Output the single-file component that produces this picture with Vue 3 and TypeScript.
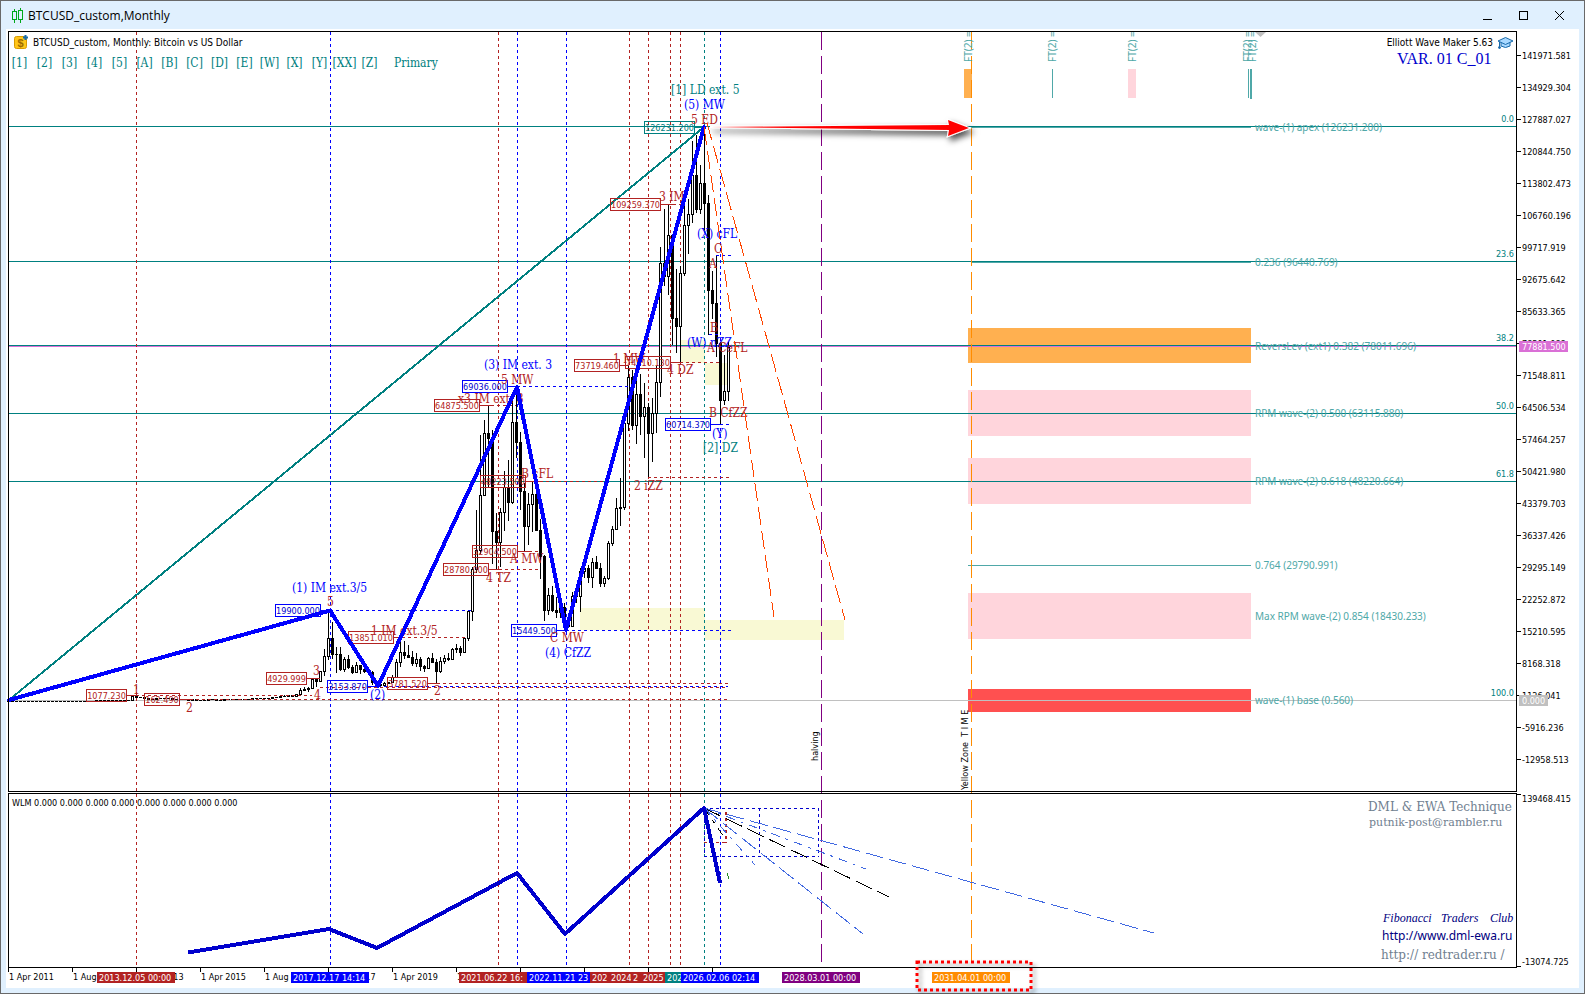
<script setup lang="ts">
type Seg = [number, number, number, number]

const FIRST_X = 8.5
const MONTH = 4
const TOP_PRICE = 141971.581
const STEP = 7042.277

const yOf = (k: number): number => 55.5 + ((TOP_PRICE - k * 1000) / STEP) * 32

// Monthly quotes in thousands: early years by close only, later years as [high, low, close]
const early: number[] = [
  0, 0.01, 0.02, 0.01, 0.01, 0.01, 0, 0, 0,
  0.01, 0, 0, 0, 0.01, 0.01, 0.01, 0.01, 0.01, 0.01, 0.01, 0.01,
  0.02, 0.03, 0.09, 0.14, 0.13, 0.1, 0.11, 0.14, 0.14, 0.2, 1.12,
  0.75, 0.8, 0.55, 0.45, 0.45, 0.63, 0.64, 0.58, 0.48, 0.39, 0.34, 0.38, 0.32,
  0.22, 0.25, 0.24, 0.24, 0.23, 0.26, 0.28, 0.23, 0.24, 0.31, 0.38, 0.43,
  0.37, 0.44, 0.42, 0.45, 0.53, 0.67, 0.62, 0.57, 0.61, 0.7, 0.74, 0.96,
]
const late: [number, number, number][] = [
  [1.16, 0.75, 0.97], [1.22, 0.93, 1.19], [1.33, 0.89, 1.08], [1.36, 1.06, 1.35], [2.78, 1.34, 2.3], [3, 2.05, 2.48],
  [2.93, 1.81, 2.87], [4.76, 2.6, 4.7], [4.93, 2.98, 4.36], [6.47, 4.1, 6.45], [11.4, 5.4, 9.9], [19.9, 9, 13.8],
  [17.2, 9.2, 10.2], [11.8, 6, 10.3], [11.7, 6.6, 6.93], [9.7, 6.4, 9.24], [10, 7.05, 7.49], [7.8, 5.8, 6.39],
  [8.5, 6.07, 7.73], [7.7, 5.88, 7.01], [7.4, 6.1, 6.61], [6.8, 6.2, 6.34], [6.6, 3.5, 4.02], [4.3, 3.15, 3.69],
  [4.1, 3.35, 3.41], [4.2, 3.3, 3.8], [4.15, 3.67, 4.1], [5.65, 4.05, 5.3], [9.1, 5.3, 8.55], [13.85, 7.45, 10.8],
  [13.2, 9.05, 10.08], [12.3, 9.3, 9.59], [10.9, 7.7, 8.28], [10.5, 7.3, 9.15], [9.5, 6.5, 7.55], [7.8, 6.4, 7.2],
  [9.6, 6.85, 9.35], [10.5, 8.4, 8.52], [9.2, 3.78, 6.41], [9.5, 6.15, 8.62], [10.1, 8.1, 9.45], [10.4, 8.8, 9.14],
  [11.5, 8.9, 11.33], [12.5, 10.5, 11.65], [12.05, 9.8, 10.78], [14.1, 10.4, 13.8], [19.9, 13.2, 19.7], [29.3, 17.6, 28.98],
  [42, 28, 33.1], [58.4, 32.3, 45.2], [61.8, 45, 58.8], [64.9, 47, 57.8], [59.6, 30, 37.3], [41.3, 28.8, 35],
  [42.4, 29.3, 41.5], [50.5, 37.3, 47.1], [52.9, 39.6, 43.8], [67, 43.3, 61.3], [69, 53.3, 57], [59.1, 42, 46.2],
  [47.9, 32.9, 38.5], [45.8, 34.3, 43.2], [48.2, 37.2, 45.5], [47.4, 37.6, 37.6], [40, 26.7, 31.8], [32, 17.6, 19.9],
  [24.7, 18.8, 23.3], [25.2, 19.5, 20.05], [22.8, 18.1, 19.4], [21, 18.2, 20.5], [21.5, 15.45, 17.2], [18.4, 16.3, 16.5],
  [23.9, 16.5, 23.1], [25.2, 21.4, 23.1], [29.2, 19.6, 28.5], [31, 26.9, 29.2], [29.8, 25.8, 27.2], [31.4, 24.8, 30.5],
  [31.8, 28.9, 29.2], [30.2, 25, 25.9], [27.5, 24.9, 27], [35.2, 26.5, 34.7], [38.4, 34.1, 37.7], [44.7, 37.6, 42.3],
  [48.9, 38.5, 42.6], [63.9, 41.9, 61.2], [73.7, 59.3, 71.3], [72.7, 59.6, 60.6], [71.9, 56.5, 67.5], [71.9, 58.4, 62.7],
  [70, 53.5, 64.6], [65.6, 49.2, 59], [66.5, 52.5, 63.3], [73.6, 58.9, 70.2], [99.8, 66.8, 96.4], [108.3, 91.2, 93.4],
  [109.26, 89.3, 102.4], [102.7, 78.2, 84.3], [95, 76.6, 82.5], [95.7, 74.4, 94.2], [111.9, 93.4, 104.6], [110.5, 98.2, 107.1],
  [123.2, 105.1, 115.7], [124.5, 107.3, 108.2], [117.9, 107.2, 114], [126.23, 103.6, 109.5], [111.2, 80.5, 90.4], [94.6, 84, 87.5],
  [97.9, 75.6, 78.7], [79, 60.7, 66.1], [76, 65, 68.2], [79, 66, 77.9],
]

interface Candle { x: number; high: number; low: number; top: number; h: number; up: boolean }
const candles: Candle[] = []
let prev = 0
const pushCandle = (high: number, low: number, close: number): void => {
  const a = Math.round(yOf(Math.max(prev, close)))
  const b = Math.round(yOf(Math.min(prev, close)))
  candles.push({
    x: FIRST_X + MONTH * candles.length,
    high: yOf(high), low: yOf(low), top: a, h: b - a, up: close >= prev,
  })
  prev = close
}
early.forEach((c) => pushCandle(c, c, c))
late.forEach((q) => pushCandle(q[0], q[1], q[2]))

const axis = Array.from({ length: 23 }, (_, i) => ({
  y: 55.5 + 32 * i,
  label: (TOP_PRICE - STEP * i).toFixed(3),
}))

const waves: string[] = ['[1]', '[2]', '[3]', '[4]', '[5]', '[A]', '[B]', '[C]', '[D]', '[E]', '[W]', '[X]', '[Y]', '[XX]', '[Z]']

const verticals: { x: number; c: string }[] = [
  { x: 136.5, c: 'brown' }, { x: 330.5, c: 'blue' }, { x: 498.5, c: 'brown' }, { x: 517.5, c: 'blue' },
  { x: 566.5, c: 'blue' }, { x: 629.5, c: 'brown' }, { x: 648.5, c: 'brown' }, { x: 670.5, c: 'brown' },
  { x: 680.5, c: 'brown' }, { x: 704.5, c: 'teal' }, { x: 720.5, c: 'blue' },
]

const fibLevels = [
  { y: 126.5, t: '0.0' }, { y: 261.5, t: '23.6' }, { y: 345.5, t: '38.2' },
  { y: 413.5, t: '50.0' }, { y: 481.5, t: '61.8' }, { y: 700.5, t: '100.0' },
]
const targets = [
  { y: 127.5, t: 'wave-(1) apex (126231.200)' },
  { y: 262.5, t: '0.236 (96440.769)' },
  { y: 346.5, t: 'ReversLev (ext1) 0.382 (78011.696)' },
  { y: 413.5, t: 'RPM wave-(2) 0.500 (63115.880)' },
  { y: 481.5, t: 'RPM wave-(2) 0.618 (48220.664)' },
  { y: 565.5, t: '0.764 (29790.991)' },
  { y: 616.5, t: 'Max RPM wave-(2) 0.854 (18430.233)' },
  { y: 700.5, t: 'wave-(1) base (0.560)' },
]
const zones = [
  { y: 328, h: 35, f: '#ffb050' }, { y: 390, h: 46, f: '#ffd5dc' }, { y: 458, h: 46, f: '#ffd5dc' },
  { y: 593, h: 46, f: '#ffd5dc' }, { y: 689, h: 23, f: '#ff5050' },
]

// Price tags: box left, box width, level, end of solid lead, end of dashed lead
interface Tag { x: number; w: number; y: number; t: string; c: string; s: number; d: number }
const tags: Tag[] = [
  { x: 644, w: 51, y: 127.5, t: '126231.200', c: 'teal', s: 704, d: 704 },
  { x: 610, w: 51, y: 204.5, t: '109259.370', c: 'brown', s: 673, d: 682 },
  { x: 574, w: 46, y: 365.5, t: '73719.460', c: 'brown', s: 629, d: 629 },
  { x: 625, w: 46, y: 362.5, t: '74410.130', c: 'brown', s: 680, d: 720 },
  { x: 665, w: 46, y: 424.5, t: '60714.370', c: 'blue', s: 720, d: 729 },
  { x: 462, w: 46, y: 386.5, t: '69036.000', c: 'blue', s: 517, d: 628 },
  { x: 434, w: 46, y: 405.5, t: '64875.500', c: 'brown', s: 491, d: 516 },
  { x: 480, w: 46, y: 481.5, t: '48223.500', c: 'brown', s: 540, d: 606 },
  { x: 472, w: 46, y: 551.5, t: '32904.500', c: 'brown', s: 529, d: 541 },
  { x: 443, w: 46, y: 569.5, t: '28780.000', c: 'brown', s: 499, d: 541 },
  { x: 511, w: 46, y: 630.5, t: '15449.500', c: 'blue', s: 566, d: 731 },
  { x: 275, w: 46, y: 610.5, t: '19900.000', c: 'blue', s: 330, d: 472 },
  { x: 348, w: 46, y: 637.5, t: '13851.010', c: 'brown', s: 402, d: 466 },
  { x: 266, w: 41, y: 678.5, t: '4929.999', c: 'brown', s: 320, d: 320 },
  { x: 327, w: 41, y: 686.5, t: '3153.870', c: 'blue', s: 378, d: 728 },
  { x: 387, w: 41, y: 683.5, t: '3781.520', c: 'brown', s: 437, d: 728 },
  { x: 86, w: 41, y: 695.5, t: '1077.230', c: 'brown', s: 136, d: 312 },
  { x: 144, w: 36, y: 699.5, t: '162.490', c: 'brown', s: 190, d: 728 },
]

const marks: { x: number; y: number; t: string; c: string }[] = [
  { x: 292, y: 592, t: '(1) IM ext.3/5', c: 'blue' },
  { x: 327, y: 606, t: '5', c: 'brown' },
  { x: 371, y: 635, t: '1 IM ext.3/5', c: 'brown' },
  { x: 313, y: 675, t: '3', c: 'brown' },
  { x: 314, y: 699, t: '4', c: 'brown' },
  { x: 133, y: 694, t: '1', c: 'brown' },
  { x: 186, y: 712, t: '2', c: 'brown' },
  { x: 370, y: 699, t: '(2)', c: 'blue' },
  { x: 434, y: 695, t: '2', c: 'brown' },
  { x: 484, y: 369, t: '(3) IM ext. 3', c: 'blue' },
  { x: 501, y: 384, t: '5 MW', c: 'brown' },
  { x: 458, y: 403, t: 'x3 IM ext. 3', c: 'brown' },
  { x: 521, y: 478, t: 'B cFL', c: 'brown' },
  { x: 510, y: 563, t: 'A MW', c: 'brown' },
  { x: 486, y: 582, t: '4 TZ', c: 'brown' },
  { x: 550, y: 642, t: 'C MW', c: 'brown' },
  { x: 545, y: 657, t: '(4) CfZZ', c: 'blue' },
  { x: 659, y: 201, t: '3 IM', c: 'brown' },
  { x: 691, y: 124, t: '5 ED', c: 'brown' },
  { x: 684, y: 109, t: '(5) MW', c: 'blue' },
  { x: 671, y: 94, t: '[1] LD ext. 5', c: 'teal' },
  { x: 697, y: 238, t: '(X) cFL', c: 'blue' },
  { x: 714, y: 253, t: 'C', c: 'brown' },
  { x: 709, y: 268, t: 'A', c: 'brown' },
  { x: 710, y: 332, t: 'B', c: 'brown' },
  { x: 687, y: 347, t: '(W) nZZ', c: 'blue' },
  { x: 707, y: 352, t: 'A CeFL', c: 'brown' },
  { x: 667, y: 374, t: '4 DZ', c: 'brown' },
  { x: 613, y: 363, t: '1 MW', c: 'brown' },
  { x: 709, y: 417, t: 'B CfZZ', c: 'brown' },
  { x: 712, y: 438, t: '(Y)', c: 'blue' },
  { x: 703, y: 452, t: '[2] DZ', c: 'teal' },
  { x: 634, y: 490, t: '2 iZZ', c: 'brown' },
]

const timeLabels: string[] = ['1 Apr 2011', '1 Aug 2012', '1 Dec 2013', '1 Apr 2015', '1 Aug 2016', '1 Dec 2017', '1 Apr 2019', '1']

const dates: { x: number; t: string; c: string }[] = [
  { x: 97, t: '2013.12.05 00:00', c: 'brown' },
  { x: 291, t: '2017.12.17 14:14', c: 'blue' },
  { x: 459, t: '2021.06.22 16:53', c: 'brown' },
  { x: 527, t: '2022.11.21 23:14', c: 'blue' },
  { x: 590, t: '2024.03.14 00:00', c: 'brown' },
  { x: 609, t: '2024.08.05 00:00', c: 'brown' },
  { x: 631, t: '2025.01.20 00:00', c: 'brown' },
  { x: 641, t: '2025.04.07 00:00', c: 'brown' },
  { x: 665, t: '2025.10.06 00:00', c: 'teal' },
  { x: 681, t: '2026.02.06 02:14', c: 'blue' },
  { x: 782, t: '2028.03.01 00:00', c: 'purple' },
  { x: 932, t: '2031.04.01 00:00', c: 'orange' },
]
// A date tag shows only the characters that fit before the next tag starts
const dateTags = dates.map((d, i) => {
  const next = dates[i + 1]?.x ?? Infinity
  const room = Math.min(78, next - d.x)
  return { ...d, w: room, t: room < 78 ? d.t.slice(0, Math.floor((room - 2) / 4.6)) : d.t }
})

const rays: { s: Seg; k: string }[] = [
  { s: [704, 808, 1154, 933], k: 'royal long' },
  { s: [704, 808, 866, 869], k: 'royal dashdot' },
  { s: [704, 808, 889, 897], k: 'black long' },
  { s: [704, 808, 863, 934], k: 'royal long' },
  { s: [704, 808, 755, 865], k: 'royal dashdot' },
  { s: [704, 808, 724, 837], k: 'black dashdot' },
]
const cycles: number[] = [972, 1056, 1136, 1251, 1256]
const titleText = 'BTCUSD_custom, Monthly: Bitcoin vs US Dollar'
const zoneText = 'Yellow Zone\u00a0 T I M E'
</script>

<template>
  <main class="window">
    <header class="titlebar">
      <svg class="app-icon" viewBox="0 0 12 16" aria-hidden="true">
        <path d="M3 1v2M3 12v3M9 0v2M9 12v3M1 3.5h4v8H1zM7 2.5h4v9H7z" />
      </svg>
      <h1>BTCUSD_custom,Monthly</h1>
      <button type="button" aria-label="Minimize"><svg viewBox="0 0 11 11"><path d="M1 9.5h9" /></svg></button>
      <button type="button" aria-label="Maximize"><svg viewBox="0 0 11 11"><path d="M1.500 1.500h8v8h-8z" /></svg></button>
      <button type="button" aria-label="Close"><svg viewBox="0 0 11 11"><path class="smooth" d="M1 1l9 9M10 1l-9 9" /></svg></button>
    </header>

    <svg class="chart" viewBox="6 29 1573 959" role="img" aria-label="Bitcoin vs US Dollar, monthly">
      <defs>
        <filter id="soft" x="-20%" y="-100%" width="140%" height="400%">
          <feDropShadow dx="3" dy="4" stdDeviation="3" flood-color="#000" flood-opacity="0.7" />
        </filter>
        <filter id="box-soft" x="-10%" y="-20%" width="125%" height="150%">
          <feDropShadow dx="3" dy="3" stdDeviation="2" flood-color="#000" flood-opacity="0.45" />
        </filter>
      </defs>
      <rect x="6" y="29" width="1573" height="959" fill="#fff" />

      <g class="crisp">
        <g fill="#f9f9d4">
          <rect x="580" y="608" width="125" height="22" />
          <rect x="705" y="620" width="139" height="20" />
          <rect x="681" y="340" width="24" height="23" />
          <rect x="705" y="363" width="23" height="22" />
        </g>
        <rect v-for="z in zones" :key="z.y" x="968" :y="z.y" width="283" :height="z.h" :fill="z.f" />
        <rect x="964" y="69" width="8" height="29" fill="#ffb050" />
        <rect x="1128" y="69" width="8" height="29" fill="#ffd5dc" />
        <path class="sea" d="M1052.500 69v29M1248.500 69v29" />
        <path class="sea wide" d="M1251 69v30" />
        <line v-for="f in fibLevels" :key="f.t" class="teal" x1="9" x2="1516" :y1="f.y" :y2="f.y" />
        <path class="sea" d="M971 127.500h280M971 262.500h280M968 565.500h283" />
        <path class="violet" d="M9 346.500h1507" />
        <path class="grey" d="M9 700.500h1507" />
        <line v-for="v in verticals" :key="v.x" :class="['dash', v.c]" :x1="v.x" :x2="v.x" y1="32" y2="966" />
        <path class="purple long" d="M821.500 32V962" />
        <path class="orange long" d="M971.500 32V962" />
      </g>

      <path class="trend" d="M9 700L704 127" />

      <g class="crisp">
        <g v-for="c in candles" :key="c.x">
          <line class="black" :x1="c.x" :x2="c.x" :y1="c.high" :y2="c.low" />
          <line v-if="c.h < 1" class="black" :x1="c.x - 1.5" :x2="c.x + 1.5" :y1="c.top + 0.5" :y2="c.top + 0.5" />
          <rect v-else :x="c.x - 1" :y="c.top + 0.5" width="2" :height="c.h" stroke="#000" :fill="c.up ? '#fff' : '#000'" />
        </g>
        <path class="dash brown" d="M648 477.500h81M320 687.500h408" />
        <path class="dash blue" d="M716 255.500h15M709 334.500h12" />
        <g v-for="t in tags" :key="t.t" :class="t.c">
          <path :d="`M${t.x + t.w} ${t.y}H${t.s}`" />
          <path class="dash" :d="`M${t.s} ${t.y}H${t.d}`" />
        </g>
      </g>

      <g class="ticker">
        <g v-for="t in tags" :key="t.t" :class="['tag', t.c]">
          <rect class="crisp" :x="t.x + 0.5" :y="t.y - 6" :width="t.w - 1" height="12" />
          <text :x="t.x + t.w / 2" :y="t.y + 3" text-anchor="middle">{{ t.t }}</text>
        </g>
      </g>

      <g class="marks">
        <text v-for="m in marks" :key="m.t + m.x" :class="m.c" :x="m.x" :y="m.y">{{ m.t }}</text>
      </g>

      <path class="impulse" d="M9 700L330 610.500 378 686 517 387 566 630 704 127" />
      <path class="forecast" d="M704 127L774 617M707 123L845 620" />

      <g class="targets">
        <text v-for="t in targets" :key="t.t" x="1255" :y="t.y + 3">{{ t.t }}</text>
        <text v-for="x in cycles" :key="x" :transform="`translate(${x} 62) rotate(-90)`">FT(2) =</text>
      </g>
      <path d="M1255 32h11l-5.500 5z" fill="#c0c0c0" />

      <g filter="url(#soft)">
        <path class="arrow" d="M710 127L949 125 948 120 969 128 948 136 949 130z" />
      </g>

      <g class="ticker">
        <text v-for="f in fibLevels" :key="f.t" class="teal" x="1514" :y="f.y - 5" text-anchor="end">{{ f.t }}</text>
        <text transform="translate(818 761) rotate(-90)">halving</text>
        <text transform="translate(968 790) rotate(-90)">{{ zoneText }}</text>
        <text class="heading" x="33" y="46">{{ titleText }}</text>
        <text class="heading" x="1493" y="46" text-anchor="end">Elliott Wave Maker 5.63</text>
        <text x="12" y="806">WLM 0.000 0.000 0.000 0.000 0.000 0.000 0.000 0.000</text>
      </g>
      <text class="variant" x="1397" y="64">VAR. 01 C_01</text>

      <g>
        <rect x="14.500" y="36.500" width="12" height="12" rx="2" fill="#ffc61a" stroke="#d99a00" />
        <text class="coin" x="20.500" y="47" text-anchor="middle">$</text>
        <path d="M25.500 35v5M23 37.500h5" stroke="#1769aa" stroke-width="2" fill="none" />
      </g>
      <g stroke="#1769aa" stroke-linejoin="round">
        <path d="M1501 42v4q4.500 3 9 0v-4" fill="#a8d8ff" />
        <path d="M1498 41l7.500-3.500 7.500 3.500-7.500 3.500z" fill="#a8d8ff" />
        <path d="M1499.500 42v5" fill="none" />
        <circle cx="1499.500" cy="47.500" r="1" fill="#1769aa" />
      </g>

      <foreignObject x="7" y="53" width="460" height="22">
        <nav class="waves" aria-label="Wave labels">
          <button v-for="w in waves" :key="w" type="button">{{ w }}</button>
          <span>Primary</span>
        </nav>
      </foreignObject>

      <g class="crisp black frame">
        <rect x="8.500" y="31.500" width="1508" height="760" />
        <rect x="8.500" y="793.500" width="1508" height="174" />
        <path d="M1517 794.500h4M1517 966.500h4" />
        <line v-for="a in axis" :key="a.y" x1="1517" x2="1521" :y1="a.y" :y2="a.y" />
        <line v-for="i in 12" :key="i" :x1="64 * i - 55.5" :x2="64 * i - 55.5" y1="968" y2="972" />
      </g>

      <g class="ticker">
        <text v-for="a in axis" :key="a.y" x="1522" :y="a.y + 3">{{ a.label }}</text>
        <text x="1522" y="802">139468.415</text>
        <text x="1522" y="965">-13074.725</text>
        <rect x="1519" y="341" width="49" height="11" fill="#da70d6" />
        <text class="inverse" x="1522" y="350">77881.500</text>
        <rect x="1519" y="695" width="29" height="11" fill="#c0c0c0" />
        <text class="inverse" x="1522" y="704">0.000</text>
        <text v-for="(t, i) in timeLabels" :key="t" :x="9 + 64 * i" y="980">{{ t }}</text>
        <g v-for="d in dateTags" :key="d.x" :class="['date', d.c]">
          <rect :x="d.x" y="972" :width="d.w" height="11" />
          <text :x="d.x + 2" y="981">{{ d.t }}</text>
        </g>
      </g>

      <g class="crisp">
        <path class="dash navyline" d="M704 808.500h114.500v48M704.500 808v48.500h114M759.500 808v48" />
        <path class="dash brown" d="M704 842.500h22" />
        <path class="dash brown wide" d="M726 812v31" />
        <path d="M727.500 873v3M728.500 876v3" stroke="#228b22" />
        <line v-for="(r, i) in rays" :key="i" :class="r.k" :x1="r.s[0]" :y1="r.s[1]" :x2="r.s[2]" :y2="r.s[3]" />
      </g>
      <path class="wlm" d="M188 952.500L329 929 377 948 517 873 565 934 704 808 720 883" />

      <g class="credits">
        <text class="bookman large" x="1368" y="811">DML &amp; EWA Technique</text>
        <text class="bookman small" x="1369" y="826">putnik-post@rambler.ru</text>
        <g class="club">
          <text x="1383" y="922">Fibonacci</text>
          <text x="1441" y="922">Traders</text>
          <text x="1490" y="922">Club</text>
        </g>
        <a href="http://www.dml-ewa.ru"><text class="site" x="1382" y="940">http://www.dml-ewa.ru</text></a>
        <a href="http://redtrader.ru/"><text class="bookman large" x="1381" y="959">http:// redtrader.ru /</text></a>
      </g>

      <rect class="callout" x="917" y="962" width="114" height="28" filter="url(#box-soft)" />
    </svg>
  </main>
</template>

<style>
body {
  margin: 0;
  background: #e0f0fe;
}
</style>

<style scoped>
.window {
  box-sizing: border-box;
  min-height: 100vh;
  border: 1px solid #696969;
  background: #e0f0fe;
  padding: 0 5px 5px;
}
.titlebar {
  display: flex;
  align-items: center;
  box-sizing: border-box;
  height: 28px;
  padding: 1px 2px 0 0;
}
.app-icon {
  width: 12px;
  height: 16px;
  margin: 0 5px;
  fill: none;
  stroke: #00a818;
  stroke-width: 1;
  shape-rendering: crispEdges;
}
h1 {
  flex: 1;
  margin: 0;
  font: 400 12px/16px "Open Sans", "Noto Sans", sans-serif;
  color: #000;
}
.titlebar button {
  display: flex;
  align-items: center;
  justify-content: center;
  width: 36px;
  height: 27px;
  padding: 0;
  border: 0;
  background: none;
}
.titlebar button svg {
  width: 11px;
  height: 11px;
  fill: none;
  stroke: #000;
  shape-rendering: crispEdges;
}
.titlebar .smooth {
  shape-rendering: auto;
}
.chart {
  display: block;
  width: 100%;
  height: auto;
  overflow: visible;
  fill: none;
}
.crisp {
  shape-rendering: crispEdges;
}
.brown { stroke: #b22222; }
.blue { stroke: #0000ff; }
.teal { stroke: #008080; }
.purple { stroke: #800080; }
.orange { stroke: #ff8c00; }
.sea { stroke: #4fa8a8; }
.violet { stroke: #da70d6; }
.grey { stroke: #c0c0c0; }
.black { stroke: #000; }
.royal { stroke: #4169e1; }
.navyline { stroke: #0000cd; }
.wide { stroke-width: 2; }
.dash { stroke-dasharray: 3 3; }
.long { stroke-dasharray: 18 6; }
.dashdot { stroke-dasharray: 9 6 3 6; }
.trend { stroke: #008080; stroke-width: 2; shape-rendering: crispEdges; }
.impulse { stroke: #0000ff; stroke-width: 4; stroke-linejoin: round; stroke-linecap: round; shape-rendering: crispEdges; }
.forecast { stroke: #ff4500; stroke-dasharray: 18 6; shape-rendering: crispEdges; }
.wlm { stroke: #0000cd; stroke-width: 4; stroke-linejoin: round; shape-rendering: crispEdges; }
.arrow { fill: #ff0000; stroke: #fff; stroke-width: 2; paint-order: stroke; }
.callout { stroke: #ff0000; stroke-width: 3; stroke-dasharray: 3 3; }

.ticker text {
  font: 9px "DejaVu Sans Condensed", "Noto Sans", sans-serif;
  fill: #000;
  stroke: none;
}
.ticker text.heading { font-size: 10px; }
.ticker text.teal { fill: #008080; }
.ticker text.inverse { fill: #fff; }
.ticker .tag.brown text { fill: #b22222; }
.ticker .tag.blue text { fill: #0000cd; }
.ticker .tag.teal text { fill: #008080; }
.ticker .date text { fill: #fff; }
.date rect { stroke: none; }
.date.brown rect { fill: #b22222; }
.date.blue rect { fill: #0000ff; }
.date.teal rect { fill: #008080; }
.date.purple rect { fill: #800080; }
.date.orange rect { fill: #ff8c00; }
.marks text {
  font: 12px "DejaVu Serif Condensed", "Liberation Serif", serif;
  stroke: none;
}
.marks .brown { fill: #b22222; }
.marks .blue { fill: #0000ff; }
.marks .teal { fill: #008080; }
.targets text {
  font: 10px "Noto Sans", "Open Sans", sans-serif;
  fill: #4fa8a8;
}
.variant {
  font: 16px "Liberation Serif", serif;
  fill: #0000cd;
}
.coin {
  font: 700 11px "Liberation Sans", sans-serif;
  fill: #9c6b00;
}
.waves {
  display: flex;
  font: 12px/20px "DejaVu Serif Condensed", "Liberation Serif", serif;
  color: #008080;
}
.waves button {
  flex: 0 0 25px;
  width: 25px;
  padding: 0;
  border: 0;
  background: none;
  font: inherit;
  color: inherit;
  text-align: center;
  white-space: nowrap;
}
.waves span {
  margin-left: 12px;
}
.bookman { fill: #708090; }
.large { font: 12px "DejaVu Serif", serif; }
.small { font: 11px "DejaVu Serif", serif; }
.club text {
  font: italic 12px "Liberation Serif", serif;
  fill: #000080;
}
.site {
  font: 12px "Noto Sans", sans-serif;
  fill: #000080;
}
.credits a { text-decoration: none; }
</style>
